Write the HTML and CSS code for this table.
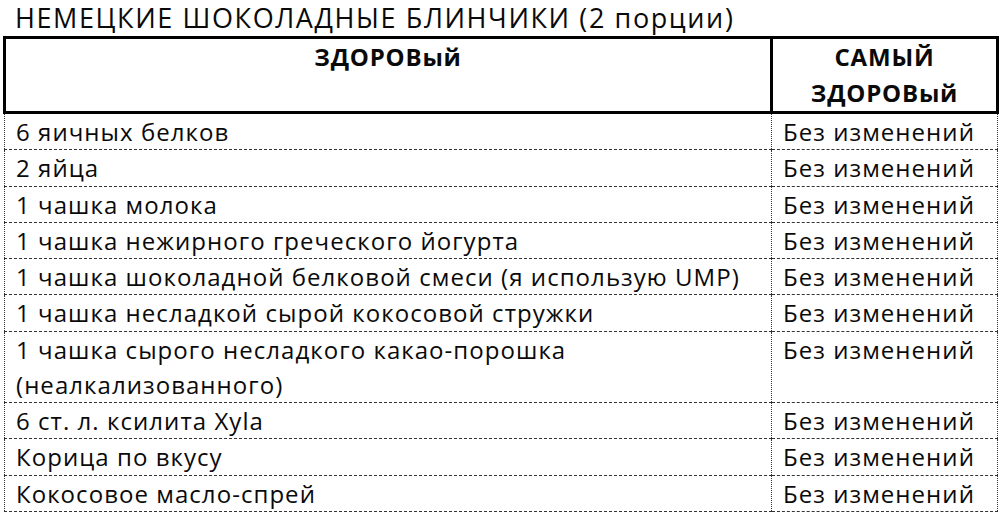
FILE: index.html
```html
<!DOCTYPE html>
<html lang="ru">
<head>
<meta charset="utf-8">
<title>Немецкие шоколадные блинчики</title>
<link rel="stylesheet" href="styles.css">
</head>
<body>
<h1 class="title">НЕМЕЦКИЕ ШОКОЛАДНЫЕ БЛИНЧИКИ (2 порции)</h1>
<table class="recipe">
  <colgroup>
    <col class="col-main">
    <col class="col-alt">
  </colgroup>
  <thead>
    <tr>
      <th>ЗДОРОВый</th>
      <th>САМЫЙ<br>ЗДОРОВый</th>
    </tr>
  </thead>
  <tbody>
    <tr><td>6 яичных белков</td><td>Без изменений</td></tr>
    <tr><td>2 яйца</td><td>Без изменений</td></tr>
    <tr><td>1 чашка молока</td><td>Без изменений</td></tr>
    <tr><td>1 чашка нежирного греческого йогурта</td><td>Без изменений</td></tr>
    <tr><td>1 чашка шоколадной белковой смеси (я использую UMP)</td><td>Без изменений</td></tr>
    <tr><td>1 чашка несладкой сырой кокосовой стружки</td><td>Без изменений</td></tr>
    <tr><td>1 чашка сырого несладкого какао-порошка<br>(неалкализованного)</td><td>Без изменений</td></tr>
    <tr><td>6 ст. л. ксилита Xyla</td><td>Без изменений</td></tr>
    <tr><td>Корица по вкусу</td><td>Без изменений</td></tr>
    <tr><td>Кокосовое масло-спрей</td><td>Без изменений</td></tr>
  </tbody>
</table>
</body>
</html>
```
FILE: styles.css
```css
html, body {
  margin: 0;
  padding: 0;
  background: #fff;
}
body {
  font-family: "Open Sans", "Liberation Sans", sans-serif;
  color: #0a0a0a;
  overflow: hidden;
}
.title {
  margin: 0;
  padding: 0 0 0 15px;
  height: 36px;
  box-sizing: border-box;
  font-size: 27px;
  font-weight: 400;
  letter-spacing: 1.6px;
  line-height: 35px;
  white-space: nowrap;
}
.recipe {
  margin-left: 3px;
  width: 996px;
  border-collapse: collapse;
  table-layout: fixed;
  font-size: 24px;
  letter-spacing: 1.05px;
}
.col-main { width: 767px; }
.recipe th {
  border: 3px solid #000;
  font-weight: 700;
  letter-spacing: 0.8px;
  text-align: center;
  vertical-align: top;
  line-height: 36px;
  padding: 0;
  height: 68px;
}
.recipe td {
  border-top: 1px dashed #333;
  border-bottom: 1px dashed #333;
  border-left: 1px dotted #333;
  border-right: 1px dotted #333;
  padding: 0 0 0 11px;
  line-height: 35.25px;
  vertical-align: top;
  white-space: nowrap;
}
```
